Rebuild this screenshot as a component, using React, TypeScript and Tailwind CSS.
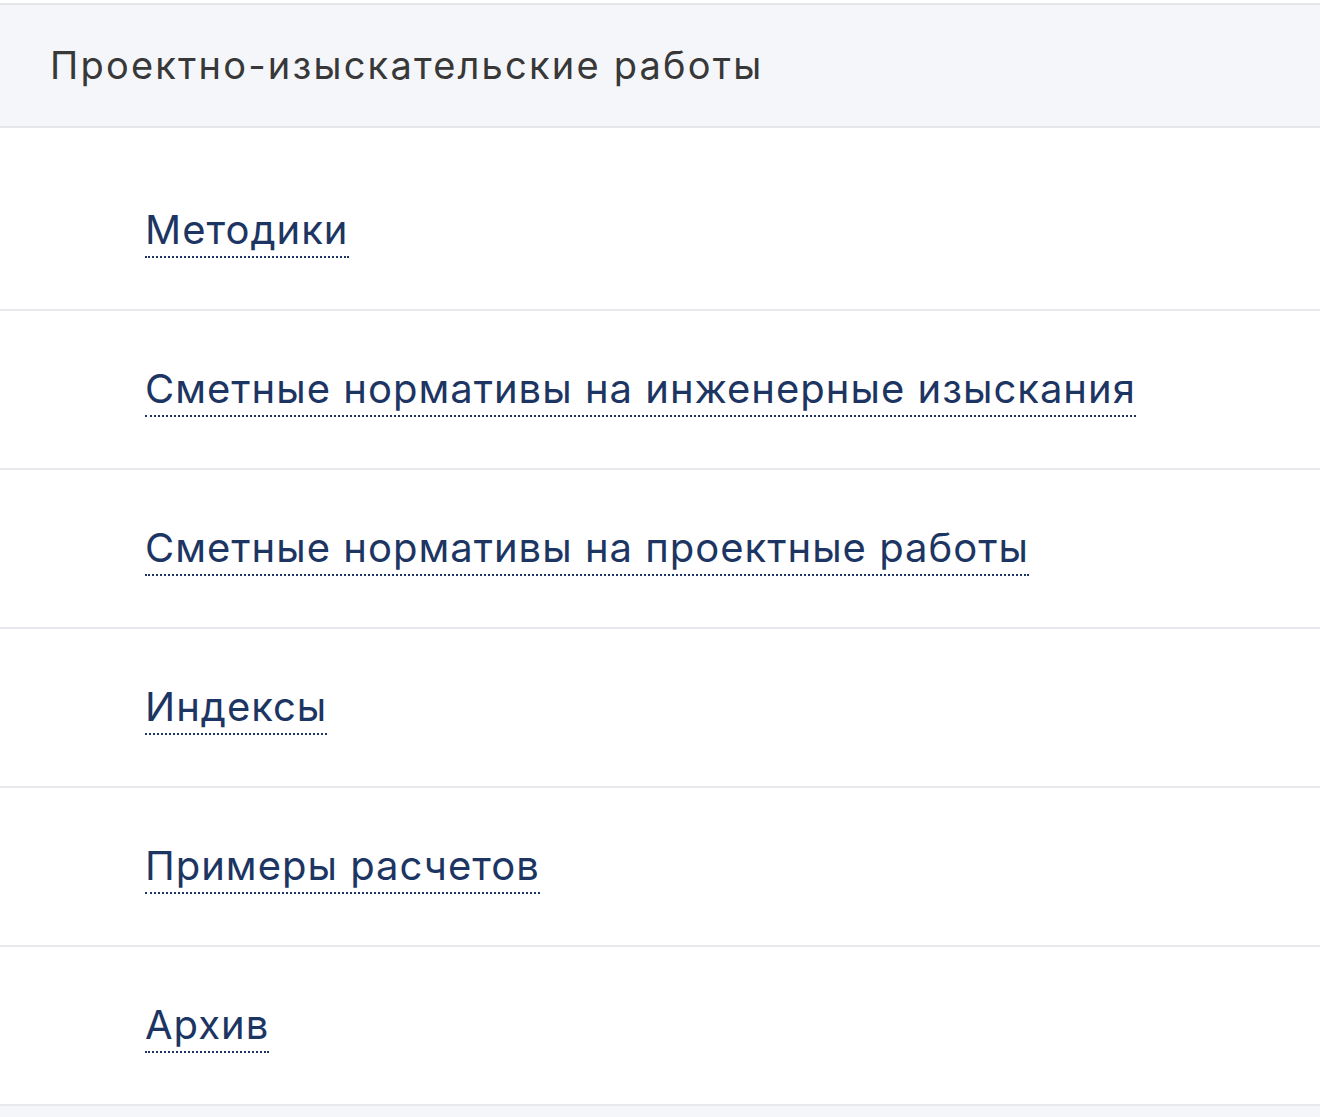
// Раздел меню: заголовок группы и список ссылок с пунктирным подчёркиванием.

const links = [
  'Методики',
  'Сметные нормативы на инженерные изыскания',
  'Сметные нормативы на проектные работы',
  'Индексы',
  'Примеры расчетов',
  'Архив',
];

function MenuRow({ title }: { title: string }) {
  return (
    <li className="border-b-2 border-[#e8e9ec] pl-[145px] pt-[52px] pb-[51px]">
      <a
        href="#"
        className="inline-block text-[40px] leading-[52px] tracking-[1px] text-[#1d3562] border-b-2 border-dotted border-[#1d3562] no-underline"
      >
        {title}
      </a>
    </li>
  );
}

export default function App() {
  return (
    <div
      className="min-h-screen bg-white pt-[3px]"
      style={{ fontFamily: 'Inter, "Noto Sans", sans-serif' }}
    >
      <div className="h-[125px] flex items-center px-[50px] bg-[#f5f6fa] border-y-2 border-[#e4e6ea]">
        <h2 className="text-[38px] font-normal tracking-[2.2px] text-[#383838]">
          Проектно-изыскательские работы
        </h2>
      </div>
      <ul className="pt-[24px]">
        {links.map((l) => (
          <MenuRow key={l} title={l} />
        ))}
      </ul>
      <div className="h-[125px] bg-[#f5f6fa]" />
    </div>
  );
}
